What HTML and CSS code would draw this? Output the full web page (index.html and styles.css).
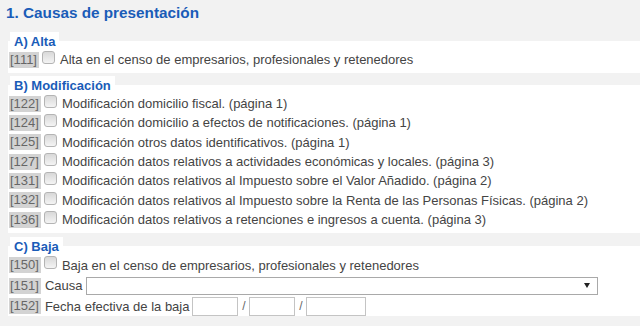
FILE: index.html
```html
<!DOCTYPE html>
<html lang="es">
<head>
<meta charset="utf-8">
<title>Causas de presentación</title>
<link rel="stylesheet" href="styles.css">
</head>
<body>
<h2 class="title">1. Causas de presentación</h2>

<fieldset class="sec sec-a">
  <legend class="tab">A) Alta</legend>
  <div class="row"><span class="code">[111]</span><input type="checkbox" class="chk"><span class="txt">Alta en el censo de empresarios, profesionales y retenedores</span></div>
</fieldset>

<fieldset class="sec sec-b">
  <legend class="tab">B) Modificación</legend>
  <div class="row r19"><span class="code">[122]</span><input type="checkbox" class="chk"><span class="txt">Modificación domicilio fiscal. (página 1)</span></div>
  <div class="row r19"><span class="code">[124]</span><input type="checkbox" class="chk"><span class="txt">Modificación domicilio a efectos de notificaciones. (página 1)</span></div>
  <div class="row r19"><span class="code">[125]</span><input type="checkbox" class="chk"><span class="txt">Modificación otros datos identificativos. (página 1)</span></div>
  <div class="row r19"><span class="code">[127]</span><input type="checkbox" class="chk"><span class="txt">Modificación datos relativos a actividades económicas y locales. (página 3)</span></div>
  <div class="row r19"><span class="code">[131]</span><input type="checkbox" class="chk"><span class="txt">Modificación datos relativos al Impuesto sobre el Valor Añadido. (página 2)</span></div>
  <div class="row r19"><span class="code">[132]</span><input type="checkbox" class="chk"><span class="txt">Modificación datos relativos al Impuesto sobre la Renta de las Personas Físicas. (página 2)</span></div>
  <div class="row r19"><span class="code">[136]</span><input type="checkbox" class="chk"><span class="txt">Modificación datos relativos a retenciones e ingresos a cuenta. (página 3)</span></div>
</fieldset>

<fieldset class="sec sec-c">
  <legend class="tab">C) Baja</legend>
  <div class="row r-150"><span class="code">[150]</span><input type="checkbox" class="chk"><span class="txt">Baja en el censo de empresarios, profesionales y retenedores</span></div>
  <div class="row r-151"><span class="code">[151]</span><span class="txt lbl">Causa</span><span class="selwrap"><select class="sel"><option></option></select><span class="arrow"></span></span></div>
  <div class="row r-152"><span class="code">[152]</span><span class="txt lbl">Fecha efectiva de la baja</span><input type="text" class="inp inp-d"><span class="slash">/</span><input type="text" class="inp inp-m"><span class="slash">/</span><input type="text" class="inp inp-y"></div>
</fieldset>
</body>
</html>
```

FILE: styles.css
```css
html, body {
  margin: 0;
  padding: 0;
  background: #f2f2f2;
  font-family: "Liberation Sans", Arial, sans-serif;
  font-size: 13px;
  color: #444;
}

.title {
  margin: 0;
  padding: 4px 6px 0;
  font-size: 15.3px;
  line-height: 18px;
  font-weight: bold;
  color: #1a5cb8;
}

.sec {
  margin: 0 0 0 8px;
  padding: 0 0 4px 1px;
  border: 0;
  background: #fff;
  min-width: 0;
}

.sec-a { margin-top: 10px; }
.sec-b { margin-top: 3px; }
.sec-c { margin-top: 4px; padding-bottom: 0; }

.tab {
  margin-left: 1px;
  padding: 2px 4px 0;
  background: #fff;
  font-size: 13px;
  font-weight: bold;
  line-height: 16px;
  color: #1a5cb8;
}

.row {
  display: flex;
  align-items: center;
  height: 19px;
  white-space: nowrap;
}

.r19 { height: 19.33px; }
.r-150 { height: 20px; }
.r-151 { height: 21px; }
.r-152 { height: 20px; }

.code {
  display: inline-block;
  background: #d3d3d3;
  color: #666;
  line-height: 16px;
  padding: 0 2px 0 1px;
}

.chk {
  appearance: none;
  -webkit-appearance: none;
  width: 13px;
  height: 13px;
  margin: 0 5px 0 3px;
  align-self: flex-start;
  margin-top: 1px;
  border: 1px solid #b4b4b4;
  border-radius: 3px;
  background: linear-gradient(#d8d8d8, #f4f4f4);
  box-sizing: border-box;
}

.txt { color: #444; }
.lbl { margin-left: 4px; margin-right: 3px; }

.selwrap {
  position: relative;
  display: inline-block;
}

.sel {
  appearance: none;
  -webkit-appearance: none;
  display: block;
  width: 512px;
  height: 18px;
  margin: 0;
  padding: 0;
  border: 1px solid #a9a9a9;
  background: #fff;
  font-family: inherit;
  font-size: 13px;
}

.arrow {
  position: absolute;
  right: 8px;
  top: 6px;
  width: 0;
  height: 0;
  border-left: 3px solid transparent;
  border-right: 3px solid transparent;
  border-top: 5px solid #222;
}

.inp {
  height: 19px;
  margin: 0;
  padding: 0;
  border: 1px solid #c4c4c4;
  box-sizing: border-box;
  background: #fff;
  font-family: inherit;
  font-size: 13px;
}

.inp-d, .inp-m { width: 46px; }
.inp-y { width: 60px; }

.slash {
  width: 11px;
  text-align: center;
  color: #666;
  font-size: 12px;
}
```
